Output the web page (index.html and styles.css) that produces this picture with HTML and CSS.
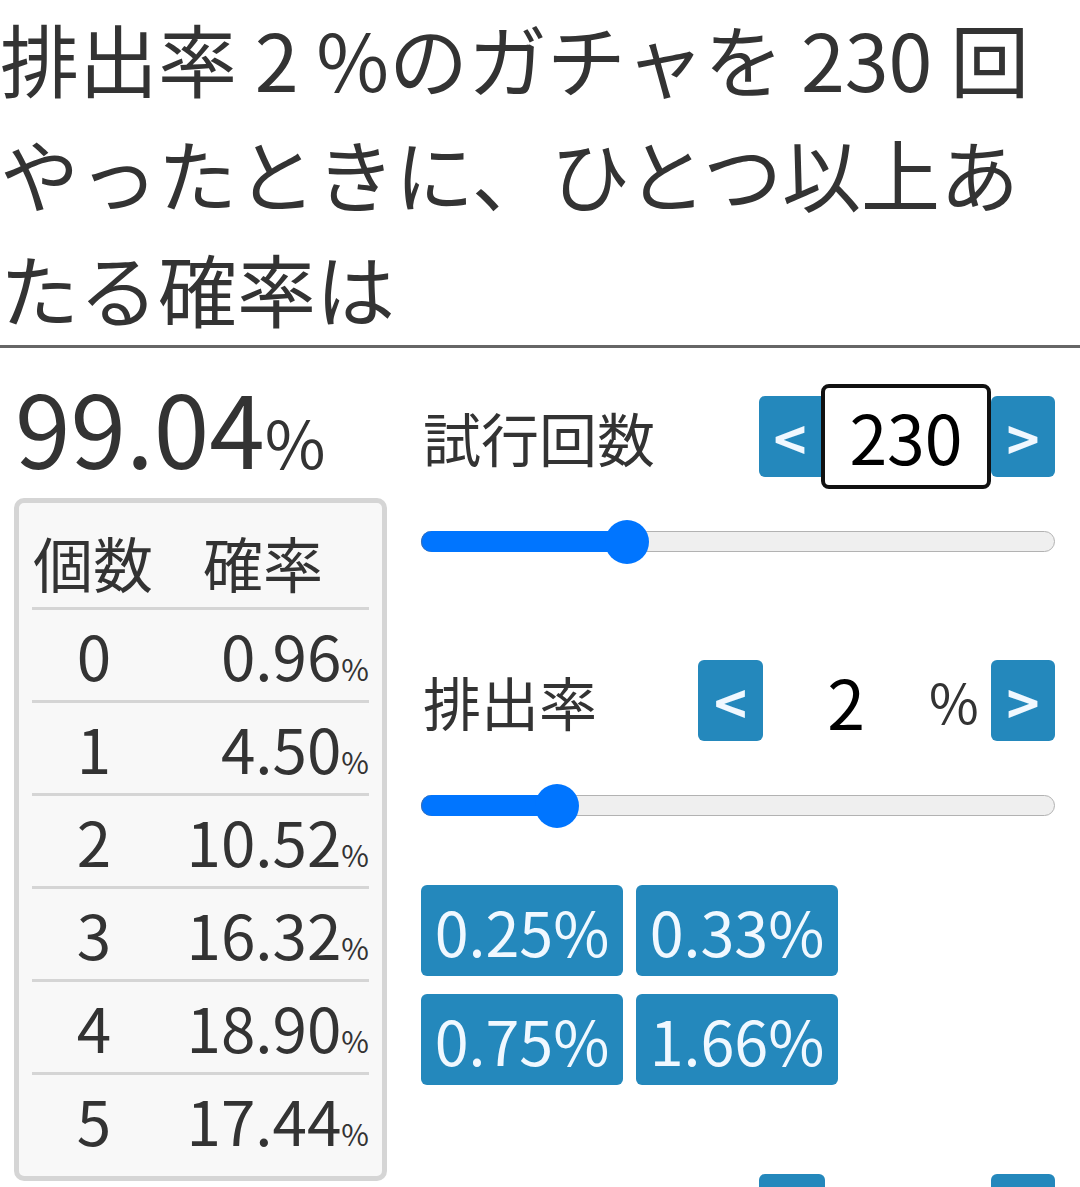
FILE: index.html
```html
<!DOCTYPE html>
<html lang="ja">
<head>
<meta charset="utf-8">
<link rel="stylesheet" href="styles.css">
</head>
<body>
<h1 class="title">排出率 2 %のガチャを 230 回やったときに、ひとつ以上あたる確率は</h1>
<div class="main">
  <div class="left">
    <div class="total">99.04<span class="total-pct">%</span></div>
    <div class="box">
      <div class="thead"><span class="h1c">個数</span><span class="h2c">確率</span></div>
      <div class="row"><span class="n">0</span><span class="p">0.96<small>%</small></span></div>
      <div class="row"><span class="n">1</span><span class="p">4.50<small>%</small></span></div>
      <div class="row"><span class="n">2</span><span class="p">10.52<small>%</small></span></div>
      <div class="row"><span class="n">3</span><span class="p">16.32<small>%</small></span></div>
      <div class="row"><span class="n">4</span><span class="p">18.90<small>%</small></span></div>
      <div class="row"><span class="n">5</span><span class="p">17.44<small>%</small></span></div>
    </div>
  </div>
  <div class="right">
    <div class="ctrl">
      <span class="label">試行回数</span>
      <div class="stepper">
        <button class="btn btn-l">&lt;</button>
        <div class="numbox">230</div>
        <button class="btn btn-r">&gt;</button>
      </div>
    </div>
    <div class="slider s1">
      <div class="fill" style="width:205px"></div>
      <div class="thumb" style="left:183px"></div>
    </div>
    <div class="ctrl c2">
      <span class="label">排出率</span>
      <div class="stepper">
        <button class="btn btn-l2">&lt;</button>
        <div class="plain">2</div>
        <span class="unit">%</span>
        <button class="btn btn-r">&gt;</button>
      </div>
    </div>
    <div class="slider s2">
      <div class="fill" style="width:135px"></div>
      <div class="thumb" style="left:113px"></div>
    </div>
    <div class="presets">
      <button class="preset">0.25%</button>
      <button class="preset">0.33%</button>
      <button class="preset">0.75%</button>
      <button class="preset">1.66%</button>
    </div>
    <div class="ctrl c3">
      <span class="label"></span>
      <div class="stepper">
        <button class="btn btn-l3">&lt;</button>
        <div class="gap3"></div>
        <button class="btn btn-r">&gt;</button>
      </div>
    </div>
  </div>
</div>
</body>
</html>
```

FILE: styles.css
```css
html, body {
  margin: 0;
  padding: 0;
  background: #fff;
}
body {
  font-family: "Noto Sans CJK JP", "Noto Sans", sans-serif;
  color: #333;
  overflow: hidden;
  height: 1187px;
}
.title {
  margin: 0;
  font-size: 79px;
  font-weight: normal;
  line-height: 115px;
  padding: 0;
  height: 345px;
  border-bottom: 3px solid #666;
}
.main {
  display: flex;
  align-items: flex-start;
}
.left {
  width: 373px;
  margin-left: 14px;
}
.total {
  font-size: 100px;
  line-height: 1;
  padding-top: 28px;
  height: 122px;
  padding-left: 1px;
  box-sizing: border-box;
  margin-bottom: 28px;
}
.total-pct {
  font-size: 66px;
}
.box {
  border: 5px solid #d5d5d5;
  border-radius: 10px;
  background: #f8f8f8;
  padding: 0 13px 11px;
  height: 683px;
  box-sizing: border-box;
}
.thead {
  display: flex;
  height: 104px;
  font-size: 60px;
  line-height: 90px;
  padding-top: 14px;
  box-sizing: border-box;
}
.h1c {
  width: 120px;
  padding-left: 1px;
}
.h2c {
  padding-left: 50px;
}
.row {
  display: flex;
  border-top: 3px solid #d5d5d5;
  height: 93px;
  box-sizing: border-box;
  font-size: 62px;
  line-height: 88px;
}
.n {
  width: 124px;
  text-align: center;
}
.p {
  flex: 1;
  text-align: right;
}
.p small {
  font-size: 30px;
}
.right {
  margin-left: 34px;
  width: 634px;
  padding-top: 36px;
}
.ctrl {
  display: flex;
  align-items: center;
  justify-content: space-between;
  height: 105px;
}
.label {
  font-size: 58px;
  padding-left: 2px;
}
.stepper {
  display: flex;
  align-items: center;
}
.btn {
  font-family: "Noto Sans CJK JP", sans-serif;
  background: #2488bc;
  color: aliceblue;
  border: none;
  border-radius: 6px;
  height: 81px;
  font-size: 56px;
  font-weight: bold;
  padding: 0;
  line-height: 1;
}
.btn-l {
  width: 62px;
  border-radius: 6px 0 0 6px;
}
.btn-r {
  width: 64px;
}
.btn-l2 {
  width: 65px;
}
.btn-l3 {
  width: 66px;
}
.gap3 {
  width: 166px;
}
.numbox {
  width: 170px;
  height: 105px;
  box-sizing: border-box;
  border: 4px solid #111;
  border-radius: 8px;
  font-size: 68px;
  line-height: 95px;
  text-align: center;
  color: #000;
  background: #fff;
}
.plain {
  width: 166px;
  text-align: center;
  font-size: 68px;
  color: #000;
  line-height: 81px;
}
.unit {
  width: 62px;
  font-size: 54px;
  line-height: 81px;
  color: #333;
}
.slider {
  position: relative;
  height: 21px;
  box-sizing: border-box;
  border: 1px solid #b2b2b2;
  background: #efefef;
  border-radius: 11px;
  margin-top: 42px;
}
.fill {
  position: absolute;
  left: -1px;
  top: -1px;
  height: 21px;
  background: #0075ff;
  border-radius: 11px;
  box-shadow: inset 1px 0 0 #3a70b8;
}
.thumb {
  position: absolute;
  top: -12.5px;
  width: 44px;
  height: 44px;
  border-radius: 50%;
  background: #0075ff;
}
.c2 {
  margin-top: 96px;
}
.presets {
  display: grid;
  grid-template-columns: 202px 202px;
  column-gap: 13px;
  row-gap: 18px;
  margin-top: 69px;
}
.preset {
  font-family: "Noto Sans CJK JP", sans-serif;
  height: 91px;
  background: #2488bc;
  color: aliceblue;
  border: none;
  border-radius: 6px;
  font-size: 61px;
  padding: 0;
  line-height: 1;
}
.c3 {
  margin-top: 77px;
}
```
